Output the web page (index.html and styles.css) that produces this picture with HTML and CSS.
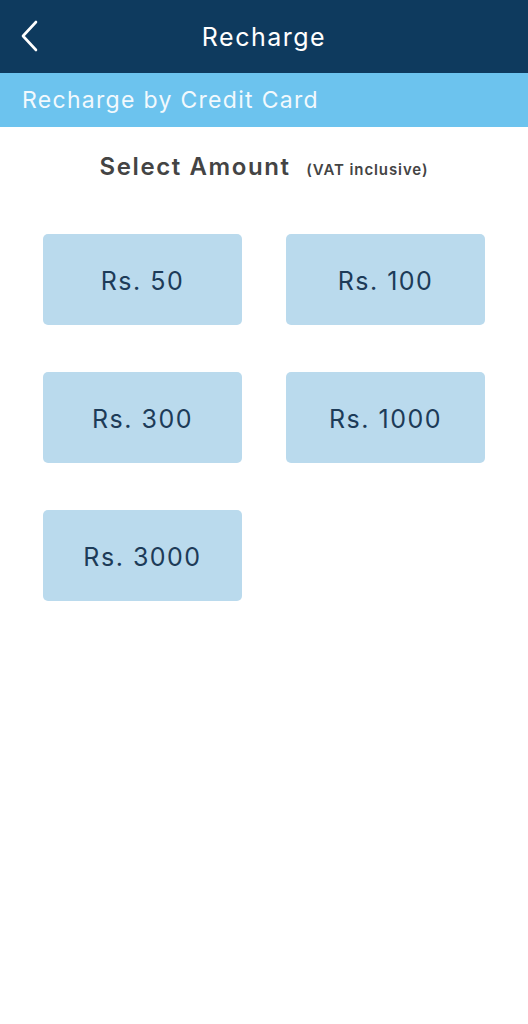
FILE: index.html
```html
<!DOCTYPE html>
<html lang="en">
<head>
    <meta charset="UTF-8">
    <meta name="viewport" content="width=device-width, initial-scale=1.0">
    <title>Recharge</title>
    <link rel="stylesheet" href="styles.css">
</head>
<body>
    <header class="top-bar">
        <a class="back" href="#" aria-label="Back">
            <svg width="20" height="32" viewBox="0 0 20 32">
                <polyline points="16,2 3,16 16,30" fill="none" stroke="#fff" stroke-width="2.6" stroke-linecap="round" stroke-linejoin="round"/>
            </svg>
        </a>
        <h1>Recharge</h1>
    </header>

    <div class="sub-bar">Recharge by Credit Card</div>

    <main class="content">
        <h2 class="heading">Select Amount <span class="vat">(VAT inclusive)</span></h2>

        <div class="amounts">
            <button class="amount">Rs. 50</button>
            <button class="amount">Rs. 100</button>
            <button class="amount">Rs. 300</button>
            <button class="amount">Rs. 1000</button>
            <button class="amount">Rs. 3000</button>
        </div>
    </main>
</body>
</html>
```

FILE: styles.css
```css
body {
    margin: 0;
    font-family: Inter, "Noto Sans", sans-serif;
    background: #fff;
    color: #444;
}
.top-bar {
    height: 73px;
    background: #0e3a5e;
    display: flex;
    align-items: center;
    justify-content: center;
    position: relative;
}
.top-bar h1 {
    margin: 0;
    color: #fff;
    font-size: 25px;
    font-weight: 400;
    letter-spacing: 1.5px;
}
.back {
    position: absolute;
    left: 20px;
    top: 20px;
    display: block;
    line-height: 0;
}
.sub-bar {
    height: 54px;
    background: #6cc3ee;
    color: #f2f9fd;
    font-size: 23px;
    padding-left: 22px;
    display: flex;
    align-items: center;
    letter-spacing: 1.3px;
}
.content {
    padding: 25px 43px;
}
.heading {
    margin: 0 0 53px;
    text-align: center;
    font-size: 24px;
    font-weight: 600;
    color: #444;
    letter-spacing: 1.6px;
}
.vat {
    font-size: 15px;
    font-weight: 600;
    margin-left: 8px;
    letter-spacing: 0.9px;
}
.amounts {
    display: grid;
    grid-template-columns: 199px 199px;
    column-gap: 44px;
    row-gap: 47px;
}
.amount {
    height: 91px;
    padding-top: 4px;
    border: none;
    border-radius: 5px;
    background: #badaed;
    color: #1d3b58;
    font-family: inherit;
    font-size: 25px;
    font-weight: 400;
    letter-spacing: 1.5px;
    cursor: pointer;
}
```
